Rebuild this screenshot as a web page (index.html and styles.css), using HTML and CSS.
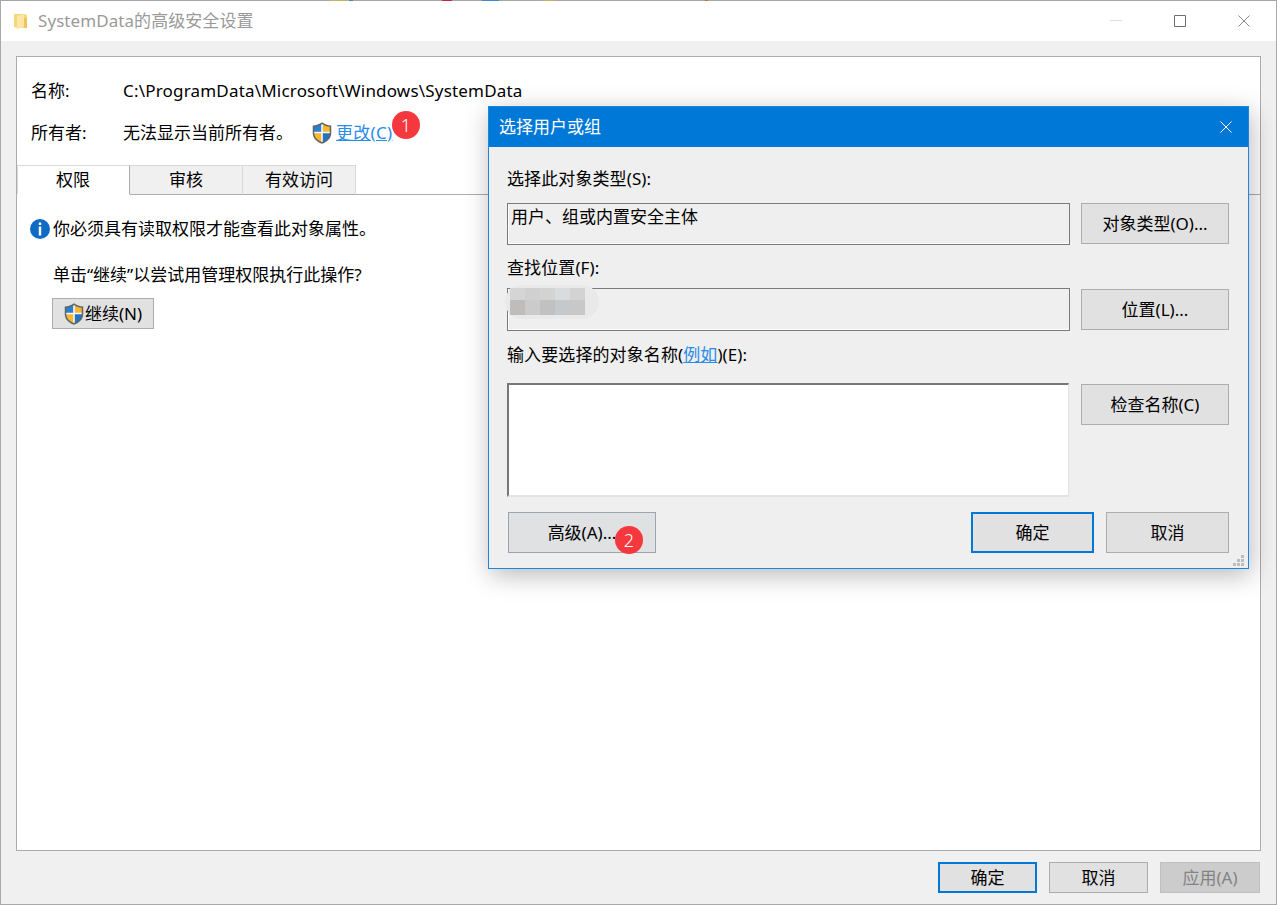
FILE: index.html
```html
<!DOCTYPE html>
<html lang="zh-CN">
<head>
<meta charset="utf-8">
<title>SystemData的高级安全设置</title>
<link rel="stylesheet" href="styles.css">
</head>
<body>
<svg class="defs" width="0" height="0" aria-hidden="true">
  <symbol id="shield" viewBox="0.7 0.3 18.6 21.400">
    <path d="M10 .6C7.6 2.6 4.6 3.6 1 3.800V11c0 5 3.600 8.600 9 10.400 5.400-1.800 9-5.400 9-10.400V3.800C15.400 3.600 12.400 2.600 10 .6Z" fill="#5f6468"/>
    <path d="M10 2.300C7.900 3.900 5.400 4.800 2.500 5v5.500h7.500Z" fill="#2b7fd0"/>
    <path d="M10 2.300C12.100 3.900 14.600 4.800 17.500 5v5.500H10Z" fill="#fbb72c"/>
    <path d="M2.500 10.500H10v9.200C5.500 18.100 2.500 15 2.500 11Z" fill="#fbb72c"/>
    <path d="M17.500 10.500H10v9.200c4.500-1.600 7.500-4.700 7.500-8.700Z" fill="#2473c4"/>
    <path d="M9.200 2.800h1.600v16.800H9.200ZM2.500 9.700h15v1.600h-15Z" fill="#f4f6f8"/>
  </symbol>
</svg>
<div class="window">
  <div class="flecks"></div>
  <header class="titlebar">
    <svg class="folder" width="14" height="17" viewBox="0 0 14 17">
      <path d="M0 1h10l3 1v13H3l-3-1Z" fill="#f6d77c"/>
      <path d="M3 3l7-2v13l-7 2Z" fill="#fbe6a3"/>
      <path d="M10 5h3v10h-3Z" fill="#eec558"/>
    </svg>
    <span class="window-title">SystemData的高级安全设置</span>
    <div class="controls">
      <svg class="ctl" width="12" height="12" viewBox="0 0 12 12"><path d="M0 5.500h12" stroke="#dedede" fill="none"/></svg>
      <svg class="ctl" width="12" height="12" viewBox="0 0 12 12"><path d="M.5.500h11v11H.5Z" stroke="#6e6e6e" fill="none"/></svg>
      <svg class="ctl" width="12" height="12" viewBox="0 0 12 12"><path d="M.5.500l11 11M11.500.500l-11 11" stroke="#8a8a8a" fill="none"/></svg>
    </div>
  </header>

  <main class="panel">
    <div class="info-row info-first">
      <span class="info-label">名称:</span>
      <span class="path">C:\ProgramData\Microsoft\Windows\SystemData</span>
    </div>
    <div class="info-row">
      <span class="info-label">所有者:</span>
      <span class="owner">无法显示当前所有者。</span>
      <svg class="shield-link" width="20" height="22"><use href="#shield"/></svg>
      <a class="link link-change" href="#">更改(C)</a>
    </div>
    <nav class="tabs">
      <span class="tab tab-active">权限</span>
      <span class="tab">审核</span>
      <span class="tab">有效访问</span>
    </nav>
    <div class="notice">
      <svg width="20" height="20" viewBox="0 0 20 20">
        <circle cx="10" cy="10" r="10" fill="#0f6cc4"/>
        <rect x="8.800" y="7.500" width="2.400" height="9" fill="#fff"/>
        <rect x="8.800" y="3.500" width="2.400" height="2.500" fill="#fff"/>
      </svg>
      <span>你必须具有读取权限才能查看此对象属性。</span>
    </div>
    <p class="prompt">单击“继续”以尝试用管理权限执行此操作?</p>
    <button class="btn btn-continue" type="button">
      <svg width="20" height="22"><use href="#shield"/></svg><span>继续(N)</span>
    </button>
  </main>

  <footer class="footer">
    <button class="btn btn-default btn-foot" type="button">确定</button>
    <button class="btn btn-foot" type="button">取消</button>
    <button class="btn btn-disabled btn-foot" type="button">应用(A)</button>
  </footer>

  <section class="dialog">
    <header class="dialog-title">
      <span>选择用户或组</span>
      <svg width="12" height="12" viewBox="0 0 12 12"><path d="M.5.500l11 11M11.500.500l-11 11" stroke="#fff" fill="none"/></svg>
    </header>
    <div class="dialog-body">
      <div class="dlg-label dlg-label-1">选择此对象类型(S):</div>
      <div class="dlg-row dlg-row-1">
        <div class="field field-1">用户、组或内置安全主体</div>
        <button class="btn btn-side" type="button">对象类型(O)...</button>
      </div>
      <div class="dlg-label dlg-label-2">查找位置(F):</div>
      <div class="dlg-row dlg-row-2">
        <div class="field field-2">
          <div class="mosaic">
            <i class="m m1"></i><i class="m m2"></i><i class="m m3"></i><i class="m m4"></i><i class="m m5"></i>
            <i class="m m6"></i><i class="m m7"></i><i class="m m8"></i><i class="m m9"></i><i class="m m10"></i>
          </div>
        </div>
        <button class="btn btn-side btn-offset" type="button">位置(L)...</button>
      </div>
      <div class="dlg-label dlg-label-3">输入要选择的对象名称(<a class="link" href="#">例如</a>)(E):</div>
      <div class="dlg-row dlg-row-3">
        <div class="names"></div>
        <button class="btn btn-side btn-offset" type="button">检查名称(C)</button>
      </div>
      <div class="dlg-actions">
        <button class="btn btn-advanced" type="button">高级(A)...</button>
        <div class="dlg-actions-right">
          <button class="btn btn-default btn-dlg" type="button">确定</button>
          <button class="btn btn-dlg" type="button">取消</button>
        </div>
      </div>
    </div>
    <svg class="grip" width="11" height="11" viewBox="0 0 11 11">
      <path d="M8 0h3v3H8ZM4 4h3v3H4ZM8 4h3v3H8ZM0 8h3v3H0ZM4 8h3v3H4ZM8 8h3v3H8Z" fill="#bdbdbd"/>
    </svg>
  </section>

  <span class="badge badge-1">1</span>
  <span class="badge badge-2">2</span>
</div>
</body>
</html>
```

FILE: styles.css
```css
* { box-sizing: border-box; }

html, body {
  margin: 0;
  width: 1277px;
  height: 905px;
  overflow: hidden;
}

body {
  font-family: "Noto Sans", "Noto Sans CJK SC", sans-serif;
  font-size: 17px;
  line-height: 24px;
  color: #000;
}

.defs { position: absolute; }

.window {
  position: relative;
  width: 1277px;
  height: 905px;
  display: flex;
  flex-direction: column;
  background: #f0f0f0;
  border: 1px solid #a9a9a9;
  border-top: 0;
}

.flecks {
  height: 1px;
  flex: none;
  background: linear-gradient(90deg,
    #a6a6a6 0 329px, #c8b06a 329px 348px, #3d86c8 348px 352px, #a6a6a6 352px 441px,
    #bb2a35 441px 451px, #a6a6a6 451px 481px, #3d86c8 481px 498px, #a6a6a6 498px 542px,
    #c8b06a 542px 553px, #a6a6a6 553px 704px, #c8703a 704px 707px, #a6a6a6 707px);
}

.titlebar {
  flex: none;
  height: 40px;
  display: flex;
  align-items: center;
  padding-left: 13px;
  background: #fff;
}

.folder { flex: none; margin-top: 1px; }

.window-title {
  margin: -1px 0 0 10px;
  letter-spacing: .07px;
  color: #9a9a9a;
}

.controls {
  margin-left: auto;
  display: flex;
  gap: 52px;
  padding: 0 26px 1px 0;
}

.panel {
  flex: 1;
  margin: 15px 15px 0;
  background: #fff;
  border: 1px solid #acacac;
  min-height: 0;
}

.info-row {
  height: 43px;
  display: flex;
  align-items: center;
  padding-left: 14px;
}

.info-first { margin-top: 11px; padding-top: 2px; }

.info-label { width: 92px; flex: none; }

.path { letter-spacing: .19px; }

.owner { width: 189px; flex: none; }

.shield-link { flex: none; margin-right: 4px; }

.link { color: #2a8ce6; text-decoration: underline; }

.link-change { letter-spacing: .3px; }

.tabs {
  margin-top: 11px;
  height: 30px;
  display: flex;
  border-bottom: 1px solid #acacac;
}

.tab {
  width: 113px;
  height: 30px;
  padding-bottom: 1px;
  display: flex;
  align-items: center;
  justify-content: center;
  background: #f0f0f0;
  border: 1px solid #d9d9d9;
  border-left: 0;
  border-bottom: 1px solid #acacac;
}

.tab-active {
  background: #fff;
  border-bottom-color: #fff;
  border-right-color: #acacac;
  border-top-color: #d9d9d9;
  box-shadow: inset 1px 0 0 #d9d9d9;
}

.notice {
  margin-top: 24px;
  padding-left: 13px;
  height: 20px;
  display: flex;
  align-items: center;
  gap: 3px;
}

.prompt {
  margin: 24px 0 0 36px;
  line-height: 24px;
}

.btn {
  display: flex;
  align-items: center;
  justify-content: center;
  padding: 0;
  font: inherit;
  color: inherit;
  background: #e1e1e1;
  border: 1px solid #adadad;
}

.btn-continue {
  margin: 11px 0 0 35px;
  width: 102px;
  height: 31px;
  gap: 1px;
}

.btn-default { border: 2px solid #0078d7; }

.btn-disabled {
  background: #cccccc;
  border-color: #bfbfbf;
  color: #838383;
}

.footer {
  flex: none;
  height: 53px;
  display: flex;
  justify-content: flex-end;
  gap: 12px;
  padding: 11px 16px 0 0;
}

.btn-foot { width: 99px; height: 31px; }
.btn-foot.btn-disabled { width: 100px; }

.dialog {
  position: absolute;
  left: 487px;
  top: 106px;
  width: 761px;
  height: 463px;
  background: #efefef;
  border: 1px solid #1a86dc;
  box-shadow: 2px 6px 24px rgba(0, 0, 0, .28);
}

.dialog-title {
  height: 40px;
  display: flex;
  align-items: center;
  justify-content: space-between;
  padding: 0 16px 0 10px;
  background: #0078d7;
  color: #fff;
}

.dialog-title span { margin-top: -1px; }

.dialog-body { padding: 0 19px 0 18px; }

.dlg-label { height: 24px; line-height: 24px; letter-spacing: .1px; }
.dlg-label-1 { margin-top: 20px; }
.dlg-label-2 { margin-top: 11px; }
.dlg-label-3 { margin-top: 12px; }

.dlg-row { display: flex; align-items: flex-start; gap: 11px; }
.dlg-row-1 { margin-top: 12px; }
.dlg-row-2 { margin-top: 8px; }
.dlg-row-3 { margin-top: 16px; }

.field {
  position: relative;
  width: 563px;
  padding: 1px 3px 0;
  line-height: 24px;
  background: #efefef;
  border: 1px solid #7a7a7a;
  box-shadow: inset 1px -1px 0 #fff;
}

.field-1 { height: 42px; }
.field-2 { height: 43px; }

.mosaic {
  position: absolute;
  left: -3px;
  top: -4px;
  width: 94px;
  height: 34px;
  padding: 3px 0 0 5px;
  display: grid;
  grid-template-columns: repeat(5, 15px);
  grid-template-rows: 12px 15px;
  background: #e9e9e9;
  border-radius: 17px;
}

.m { display: block; }
.m1 { background: #d5d5d5; }
.m2 { background: #d0d0d0; }
.m3 { background: #d3d3d1; }
.m4 { background: #dadbdd; }
.m5 { background: #d3d3d3; }
.m6 { background: #bfbdbb; }
.m7 { background: #cbcbcb; }
.m8 { background: #c1c1c1; }
.m9 { background: #c5c9cc; }
.m10 { background: #c8c8c8; }

.names {
  width: 562px;
  height: 114px;
  margin-right: 1px;
  background: #fff;
  border-style: solid;
  border-width: 2px 1px 2px 2px;
  border-color: #777 #e3e3e3 #e3e3e3 #777;
}

.btn-side { width: 148px; height: 41px; flex: none; }
.btn-offset { margin-top: 1px; }

.dlg-actions {
  margin-top: 15px;
  display: flex;
  justify-content: space-between;
}

.btn-advanced {
  margin-left: 1px;
  width: 148px;
  height: 41px;
  background: #dfe1e3;
  border-color: #9aa5af;
}

.dlg-actions-right { display: flex; gap: 12px; }

.btn-dlg { width: 123px; height: 41px; }

.grip { position: absolute; right: 4px; bottom: 2px; }

.badge {
  position: absolute;
  width: 28px;
  height: 28px;
  display: flex;
  align-items: center;
  justify-content: center;
  border-radius: 50%;
  background: #f4383d;
  color: #fff;
  font-size: 18px;
  font-weight: 300;
}

.badge-1 { left: 391px; top: 111px; }
.badge-2 { left: 614px; top: 526px; }
```
